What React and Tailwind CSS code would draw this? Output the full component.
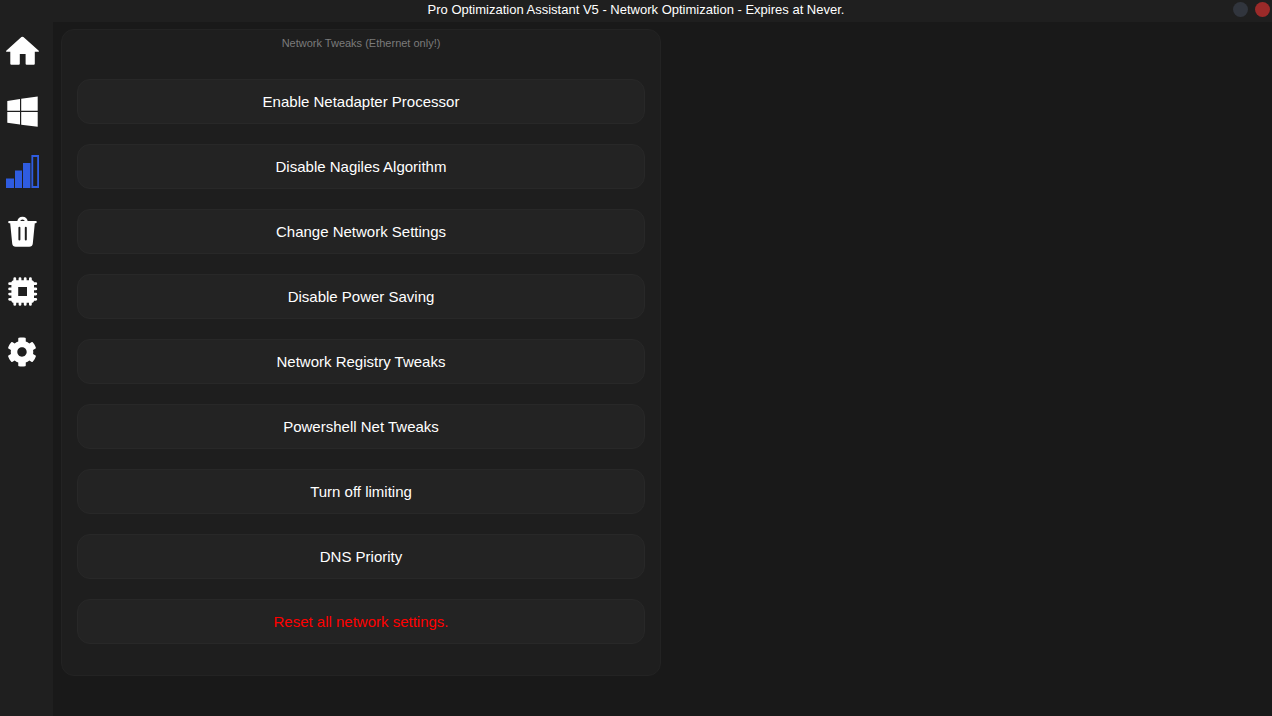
import React, { useState } from 'react';
import { FaCog } from 'react-icons/fa';

const HomeIcon = () => (
  <svg viewBox="0 0 36 36" className="w-9 h-9" fill="currentColor">
    <path d="M17.4 3.1Q18.4 2.3 19.4 3.1L34.8 16.7Q35.4 17.7 34.4 17.7H30.8V29.7Q30.8 30.7 29.8 30.7H22.6Q21.6 30.7 21.6 29.7V20H15.8V29.7Q15.8 30.7 14.8 30.7H7.3Q6.3 30.7 6.3 29.7V17.7H2.6Q1.6 17.7 2.2 16.7Z" />
  </svg>
);

const WindowsIcon = () => (
  <svg viewBox="0 0 36 36" className="w-9 h-9" fill="currentColor">
    <path d="M3.3 7L16 5V16.8H3.3ZM17.2 4.8L33.7 2.4V16.8H17.2ZM3.3 18.1H16V30.6L3.3 28.8ZM17.2 18.1H33.7V32.8L17.2 30.7Z" />
  </svg>
);

const SignalIcon = () => (
  <svg viewBox="0 0 36 36" className="w-9 h-9" fill="currentColor">
    <path d="M2 24.4H10V34H2ZM11 16.6H18V34H11ZM19 9H26.4V34H19Z" />
    <path d="M27.4 1H35V34H27.4ZM29.2 3V32H33.2V3Z" fillRule="evenodd" />
  </svg>
);

const TrashIcon = () => (
  <svg viewBox="0 0 36 36" className="w-9 h-9" fill="currentColor">
    <path d="M13.2 7.4Q14 2.7 18.5 2.7T23.8 7.4H21Q20.4 5.4 18.5 5.4T16 7.4Z" />
    <path
      d="M5.2 7H31.8Q32.8 7 32.8 8.1T31.8 9.3H30.8L28.8 29.4Q28.4 32.7 25.2 32.7H11.8Q8.6 32.7 8.2 29.4L6.2 9.3H5.2Q4.2 9.3 4.2 8.1T5.2 7ZM14.4 13.8V25.6Q14.4 26.6 15.4 26.6T16.4 25.6V13.8Q16.4 12.8 15.4 12.8T14.4 13.8ZM20.8 13.8V25.6Q20.8 26.6 21.8 26.6T22.8 25.6V13.8Q22.8 12.8 21.8 12.8T20.8 13.8Z"
      fillRule="evenodd"
    />
  </svg>
);

const ChipIcon = () => (
  <svg viewBox="0 0 36 36" className="w-9 h-9" fill="currentColor">
    <path
      d="M10 6.2H27.4Q30 6.2 30 8.8V26.2Q30 28.8 27.4 28.8H10Q7.4 28.8 7.4 26.2V8.8Q7.4 6.2 10 6.2ZM14.2 13V22H23V13Z"
      fillRule="evenodd"
    />
    <path
      d="M10.8 4.6V30.4M16 4.6V8M21.2 4.6V8M26.4 4.6V30.4M16 27V30.4M21.2 27V30.4M5.6 9.7H9M5.6 14.9H9M5.6 20.1H9M5.6 25.3H9M28 9.7H31.8M28 14.9H31.8M28 20.1H31.8M28 25.3H31.8"
      stroke="currentColor"
      strokeWidth="2.8"
      strokeLinecap="round"
    />
  </svg>
);

const navItems = [
  { key: 'home', label: 'Home', icon: <HomeIcon /> },
  { key: 'windows', label: 'Windows', icon: <WindowsIcon /> },
  { key: 'network', label: 'Network', icon: <SignalIcon /> },
  { key: 'clean', label: 'Cleaner', icon: <TrashIcon /> },
  { key: 'hardware', label: 'Hardware', icon: <ChipIcon /> },
  { key: 'settings', label: 'Settings', icon: <FaCog size={30} /> },
];

const tweaks = [
  { name: 'Enable Netadapter Processor' },
  { name: 'Disable Nagiles Algorithm' },
  { name: 'Change Network Settings' },
  { name: 'Disable Power Saving' },
  { name: 'Network Registry Tweaks' },
  { name: 'Powershell Net Tweaks' },
  { name: 'Turn off limiting' },
  { name: 'DNS Priority' },
  { name: 'Reset all network settings.', danger: true },
];

export default function App() {
  const [active, setActive] = useState('network');

  return (
    <div className="min-h-screen flex flex-col bg-[#191919] text-white font-['Liberation_Sans',Arial,sans-serif]">
      {/* Title bar */}
      <header className="grid grid-cols-[1fr_auto_1fr] items-center h-[22px] bg-[#1f1f1f]">
        <h1 className="col-start-2 text-[13px] leading-[18px] pb-[3px]">
          Pro Optimization Assistant V5 - Network Optimization - Expires at Never.
        </h1>
        <div className="flex justify-end gap-[7px] pr-[2px] pb-[3px]">
          <button aria-label="Minimize" className="w-[15px] h-[15px] rounded-full bg-[#31353d]" />
          <button aria-label="Close" className="w-[15px] h-[15px] rounded-full bg-[#9b2a29]" />
        </div>
      </header>

      <div className="flex flex-1">
        {/* Sidebar */}
        <nav className="w-[53px] shrink-0 flex flex-col bg-[#1f1f1f]">
          {navItems.map((item) => (
            <button
              key={item.key}
              aria-label={item.label}
              onClick={() => setActive(item.key)}
              className={`w-11 h-[60px] flex items-center justify-center ${
                active === item.key ? 'text-[#2f5ce0]' : 'text-white'
              }`}
            >
              {item.icon}
            </button>
          ))}
        </nav>

        {/* Tweaks panel */}
        <main className="flex-1 px-2 pt-[7px] pb-10">
          <section className="w-full max-w-[600px] px-[15px] pt-[5px] pb-[31px] rounded-[13px] border border-[#232323] bg-[#1e1e1e]">
            <h2 className="text-center text-[11px] leading-4 text-[#7b7b7b]">
              Network Tweaks (Ethernet only!)
            </h2>
            <div className="mt-7 flex flex-col gap-5">
              {tweaks.map((tweak) => (
                <button
                  key={tweak.name}
                  className={`w-full h-[45px] rounded-[13px] border border-[#282828] bg-[#232323] text-[15px] leading-5 ${
                    tweak.danger ? 'text-[#ff0000]' : 'text-white'
                  }`}
                >
                  {tweak.name}
                </button>
              ))}
            </div>
          </section>
        </main>
      </div>
    </div>
  );
}
